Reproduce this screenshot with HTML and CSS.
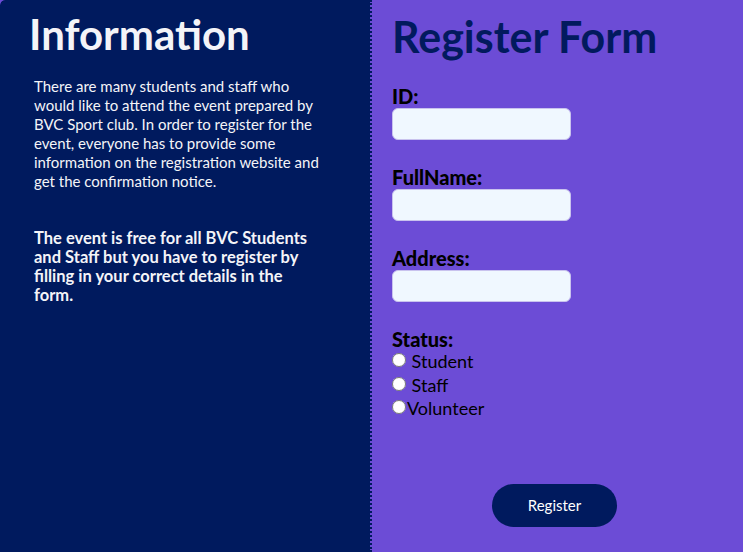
FILE: index.html
```html
<!DOCTYPE html>
<html lang="en">
<head>
<meta charset="utf-8">
<title>BVC Sport Club Registration</title>
<link rel="stylesheet" href="styles.css">
</head>
<body>
<div class="page">
  <section class="info">
    <h1 class="info-title">Information</h1>
    <p class="info-text">There are many students and staff who would like to attend the event prepared by BVC Sport club. In order to register for the event, everyone has to provide some information on the registration website and get the confirmation notice.</p>
    <p class="info-note">The event is free for all BVC Students and Staff but you have to register by filling in your correct details in the form.</p>
  </section>
  <section class="form-panel">
    <h1 class="form-title">Register Form</h1>
    <form class="reg-form">
      <label class="field-label" for="id">ID:</label>
      <input class="field-input" type="text" id="id">
      <label class="field-label" for="fullname">FullName:</label>
      <input class="field-input" type="text" id="fullname">
      <label class="field-label" for="address">Address:</label>
      <input class="field-input" type="text" id="address">
      <div class="field-label">Status:</div>
      <div class="radios">
        <label class="radio"><input type="radio" name="status"> Student</label>
        <label class="radio"><input type="radio" name="status"> Staff</label>
        <label class="radio"><input type="radio" name="status">Volunteer</label>
      </div>
      <div class="actions">
        <button class="btn" type="button">Register</button>
      </div>
    </form>
  </section>
</div>
</body>
</html>
```

FILE: styles.css
```css
html, body {
  margin: 0;
  padding: 0;
  height: 100%;
}
body {
  background: #6c4cd6;
  font-family: Lato, "Open Sans", sans-serif;
}
.page {
  display: grid;
  grid-template-columns: 372px 1fr;
  height: 552px;
}
.info {
  background: #001a5e;
  color: #f4f4f8;
  border-top-left-radius: 5px;
  border-right: 2px dotted #001a5e;
  background-clip: padding-box;
  padding: 10px 0 0 29px;
}
.info-title {
  margin: 0;
  font-size: 42px;
  line-height: 48px;
  font-weight: 700;
}
.info-text {
  margin: 19px 0 0 5px;
  font-size: 15px;
  line-height: 19px;
  width: 292px;
}
.info-note {
  margin: 38px 0 0 5px;
  font-size: 16.5px;
  line-height: 19px;
  font-weight: 700;
  width: 280px;
}
.form-panel {
  padding: 12px 0 0 20px;
}
.form-title {
  margin: 0;
  color: #021a5e;
  font-size: 43px;
  line-height: 50px;
  font-weight: 700;
}
.reg-form {
  display: flex;
  flex-direction: column;
  align-items: flex-start;
  margin-top: 23px;
}
.field-label {
  font-size: 20px;
  font-weight: 900;
  color: #000;
  line-height: 22px;
}
.field-input {
  width: 179px;
  height: 32px;
  box-sizing: border-box;
  border: 1px solid #c9c3ee;
  border-radius: 6px;
  background: #f0f8ff;
  margin: 1px 0 26px 0;
}
.radios {
  display: flex;
  flex-direction: column;
}
.radio {
  font-size: 18px;
  line-height: 23.5px;
  color: #000;
}
.radio input {
  margin: 0 1px 0 0;
  width: 14px;
  height: 14px;
  vertical-align: 1px;
}
.actions {
  align-self: stretch;
  display: flex;
  padding-left: 100px;
  margin-top: 63px;
}
.btn {
  width: 125px;
  height: 43px;
  border: none;
  border-radius: 22px;
  background: #001a5e;
  color: #fff;
  font-family: Lato, "Open Sans", sans-serif;
  font-size: 15px;
}
```
